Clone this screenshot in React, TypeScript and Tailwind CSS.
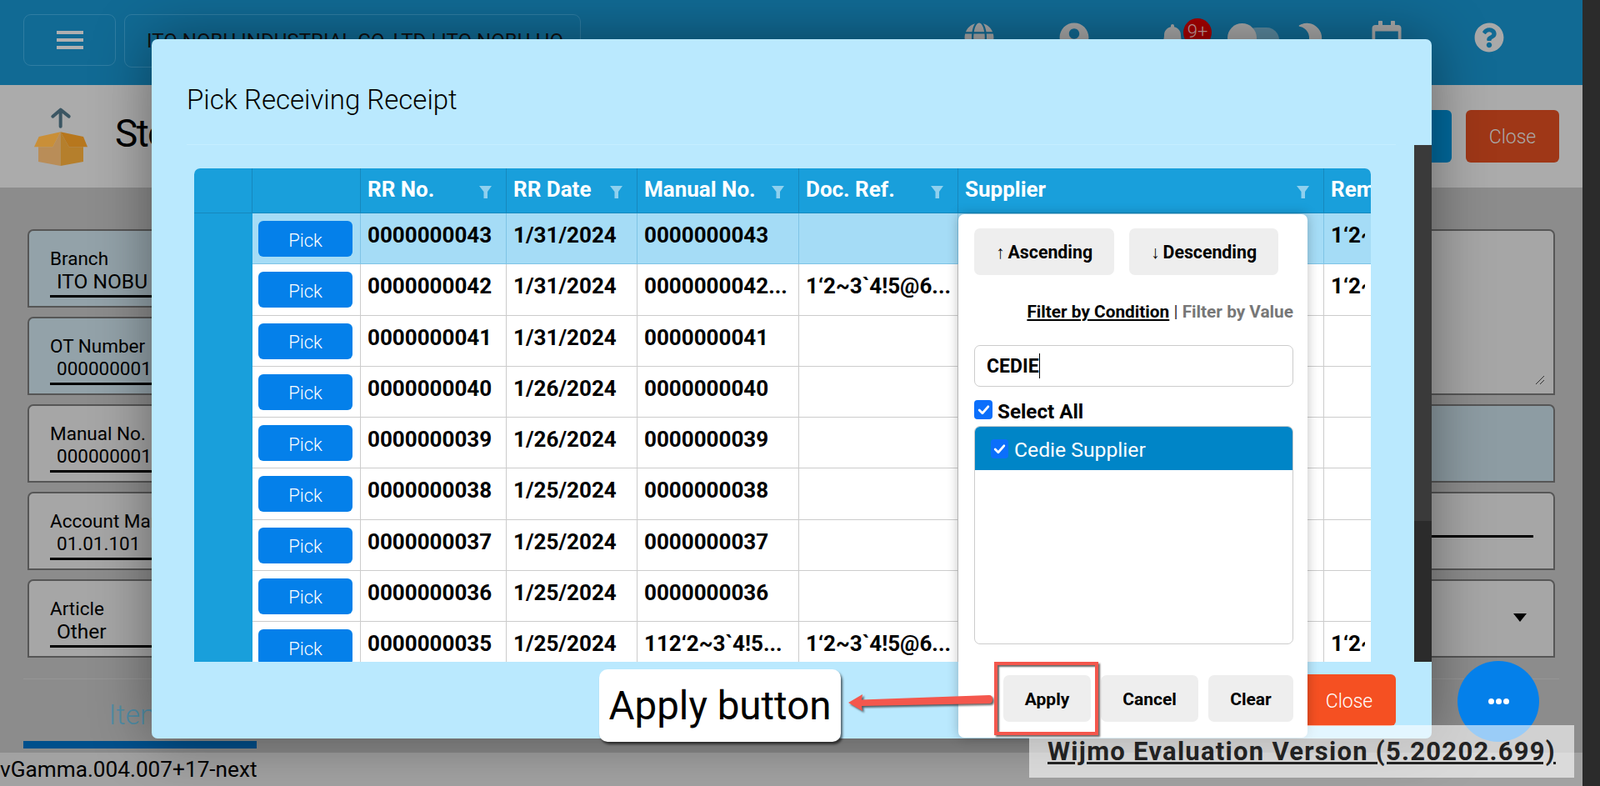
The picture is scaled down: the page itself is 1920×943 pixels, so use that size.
import { FaBell, FaGlobe, FaMoon, FaQuestionCircle, FaRegCalendar, FaUserCircle } from "react-icons/fa";

const rows = [
  { no: "0000000043", date: "1/31/2024", manual: "0000000043", doc: "", supplier: "", rem: "1‘2~3`4!5@6" },
  { no: "0000000042", date: "1/31/2024", manual: "0000000042...", doc: "1‘2~3`4!5@6...", supplier: "1‘2~3`4!5@6#7$8%9^0&1*2(3)4_5+6-7=8[9]0{1}2|3;4:5,6.7/8<9>0?1~2`3!4@5#6$7", rem: "1‘2~3`4!5@6" },
  { no: "0000000041", date: "1/31/2024", manual: "0000000041", doc: "", supplier: "1‘2~3`4!5@6#7$8%9^0&1*2(3)4_5+6-7=8[9]0{1}2|3;4:5,6.7/8<9>0?1~2`3!4@5#6$7", rem: "" },
  { no: "0000000040", date: "1/26/2024", manual: "0000000040", doc: "", supplier: "", rem: "" },
  { no: "0000000039", date: "1/26/2024", manual: "0000000039", doc: "", supplier: "", rem: "" },
  { no: "0000000038", date: "1/25/2024", manual: "0000000038", doc: "", supplier: "", rem: "" },
  { no: "0000000037", date: "1/25/2024", manual: "0000000037", doc: "", supplier: "", rem: "" },
  { no: "0000000036", date: "1/25/2024", manual: "0000000036", doc: "", supplier: "", rem: "" },
  { no: "0000000035", date: "1/25/2024", manual: "112‘2~3`4!5...", doc: "1‘2~3`4!5@6...", supplier: "", rem: "1‘2~3`4!5@6" },
];

const cols = "grid grid-cols-[70px_130px_175px_157px_194px_191px_439px_57px]";
const segoe = "[font-family:'Open_Sans',sans-serif]";

function Funnel() {
  return (
    <svg viewBox="0 0 15 15" className="w-[15px] h-[15px] shrink-0 fill-[#8fd0ee]">
      <polygon points="0,0 15,0 10,7 10,15 5.5,15 5.5,7" />
    </svg>
  );
}

function Head({ label, last }: { label: string; last?: boolean }) {
  return (
    <div className="flex items-center justify-between pl-[8px] pr-[17px] border-r border-[#1688bd] overflow-hidden last:border-r-0">
      <span className="text-[26px] font-bold text-white whitespace-nowrap -mt-[3px]">{label}</span>
      {!last && <span className="mt-[3px]"><Funnel /></span>}
    </div>
  );
}

function Cell({ text, line }: { text: string; line: string }) {
  return (
    <div className={`pl-[8px] pr-[8px] pt-[7px] border-r ${line} text-[26px] font-bold text-black whitespace-nowrap overflow-hidden last:border-r-0`}>
      <div className={text.length > 20 ? "truncate" : "overflow-hidden"}>{text}</div>
    </div>
  );
}

function Check({ className }: { className: string }) {
  return (
    <span className={`flex items-center justify-center bg-[#0b6ffb] rounded-[4px] shrink-0 ${className}`}>
      <svg viewBox="0 0 16 16" className="w-[17px] h-[17px]" fill="none" stroke="white" strokeWidth="2.6" strokeLinecap="round" strokeLinejoin="round">
        <path d="M3 8.5l3.5 3.5L13 4.5" />
      </svg>
    </span>
  );
}

function GreyButton({ children, className }: { children: React.ReactNode; className: string }) {
  return (
    <div className={`flex items-center justify-center bg-[#eeeeee] rounded-[7px] text-black font-bold h-[56px] ${className}`}>
      {children}
    </div>
  );
}

function Field({ label, value, tint, big }: { label: string; value: string; tint?: boolean; big?: boolean }) {
  return (
    <div className={`h-[94px] rounded-tl-[7px] rounded-tr-[7px] border-[2.5px] border-[#565656] pl-[25px] pr-[24px] pt-[20px] ${tint ? "bg-[#93a2a9]" : "bg-[#a6a6a6]"}`}>
      <div className={`${segoe} text-[22.5px] leading-[27px] text-black whitespace-nowrap`}>{label}</div>
      <div className={`${segoe} ${big ? "text-[24.5px]" : "text-[22.5px]"} leading-[27px] pl-[8px] text-black whitespace-nowrap`}>{value}</div>
      <div className="h-[3px] bg-black mt-[3px]" />
    </div>
  );
}

export default function App() {
  return (
    <div className="relative w-[1920px] h-[943px] overflow-hidden flex bg-[#8c8c8c] [font-family:Roboto,sans-serif]">
      <div className="w-[1899px] h-full flex flex-col">
        <header className="h-[102px] bg-[#116a94] flex items-center shrink-0">
          <div className="ml-[28px] w-[111px] h-[62px] rounded-[9px] border border-[#2f7da2] flex flex-col items-center justify-center gap-[5px] -mt-[6px]">
            <span className="w-[32px] h-[4px] bg-[#b0b0b0]" />
            <span className="w-[32px] h-[4px] bg-[#b0b0b0]" />
            <span className="w-[32px] h-[4px] bg-[#b0b0b0]" />
          </div>
          <div className="ml-[10px] w-[548px] h-[64px] rounded-[9px] border border-[#2f7da2] pl-[26px] pt-[13px] [font-family:'Liberation_Serif',serif] text-[24.1px] text-[#111] whitespace-nowrap overflow-hidden -mt-[5px]">
            ITO NOBU INDUSTRIAL CO.,LTD | ITO NOBU HO
          </div>
          <div className="ml-[460px] flex items-center text-[#a9a9a9] -mt-[12px]">
            <FaGlobe className="w-[36px] h-[36px]" />
            <FaUserCircle className="w-[36px] h-[36px] ml-[78px]" />
            <div className="relative ml-[84px]">
              <FaBell className="w-[32px] h-[32px]" />
              <span className="absolute -top-[7px] left-[29px] w-[34px] h-[34px] rounded-full bg-[#a60000] text-[#c9a0a0] text-[22px] leading-[32px] text-center font-light">9+</span>
            </div>
            <div className="relative ml-[50px] w-[62px] h-[34px] mt-[-1px]">
              <span className="absolute left-[20px] top-[5px] w-[42px] h-[30px] rounded-full bg-[#5b8aa0]" />
              <span className="absolute left-0 top-0 w-[35px] h-[35px] rounded-full bg-[#a9a9a9]" />
            </div>
            <FaMoon className="w-[36px] h-[36px] ml-[17px] rotate-[-20deg] -scale-x-100" />
            <FaRegCalendar className="w-[36px] h-[40px] ml-[58px]" />
            <FaQuestionCircle className="w-[36px] h-[36px] ml-[87px] -mt-[1px]" />
          </div>
        </header>
        <div className="h-[123px] bg-[#ababab] flex items-center shrink-0 pl-[41px]">
          <svg viewBox="123 380 192 210" className="w-[64px] h-[70px] shrink-0">
            <path d="M218 390V448M190 412L218 388L248 412" fill="none" stroke="#3b5663" strokeWidth="12" strokeLinecap="round" strokeLinejoin="round" />
            <polygon points="138,522 190,522 218,468 218,590 138,575" fill="#b98d58" />
            <polygon points="218,468 248,522 300,522 300,575 218,590" fill="#b57f2c" />
            <polygon points="123,522 140,485 218,468 190,522" fill="#c98f38" />
            <polygon points="218,468 300,485 315,522 248,522" fill="#b7771d" />
          </svg>
          <div className={`${segoe} ml-[33px] text-[46px] tracking-[-1.5px] text-black -mt-[6px] whitespace-nowrap`}>Stock Out</div>
          <div className="ml-auto mr-[28px] flex gap-[17px]">
            <div className="w-[112px] h-[63px] rounded-[6px] bg-[#006a9e]" />
            <div className={`${segoe} w-[112px] h-[63px] rounded-[6px] bg-[#9f3717] text-[#aaa] text-[23px] pt-[4px] flex items-center justify-center font-light`}>Close</div>
          </div>
        </div>
        <main className="flex-1 flex flex-col px-[33px] pt-[50px] min-h-0">
          <div className="grid grid-cols-[600px_600px] justify-between gap-y-[11px]">
            <Field label="Branch" value="ITO NOBU" tint big />
            <div className="row-span-2 rounded-tl-[7px] rounded-tr-[7px] border-[2.5px] border-[#565656] bg-[#a6a6a6] flex items-end justify-end p-[10px]">
              <svg viewBox="0 0 12 12" className="w-[12px] h-[12px]" stroke="#333" strokeWidth="1"><path d="M1 11L11 1M6 11L11 6" /></svg>
            </div>
            <Field label="OT Number" value="0000000010" tint />
            <Field label="Manual No." value="0000000010" />
            <div className="h-[94px] rounded-tl-[7px] rounded-tr-[7px] border-[2.5px] border-[#565656] bg-[#8d9ca3]" />
            <Field label="Account Manager" value="01.01.101" />
            <Field label="Remarks" value="" />
            <Field label="Article" value="Other" big />
            <div className="h-[94px] relative rounded-tl-[7px] rounded-tr-[7px] border-[2.5px] border-[#565656] bg-[#a6a6a6]">
              <span className="absolute right-[32px] top-[39px] w-0 h-0 border-l-[8px] border-r-[8px] border-t-[10px] border-l-transparent border-r-transparent border-t-black" />
            </div>
          </div>
          <div className="h-px bg-[#969696] mt-[25px] -mx-[5px]" />
          <div className="w-[280px] -ml-[5px] flex-1 flex flex-col items-center">
            <div className={`${segoe} mt-[16px] pl-[10px] text-[34px] leading-[52px] font-light text-[#4f8da6]`}>Items</div>
            <div className="h-[9px] w-full bg-[#00508c] mt-auto" />
          </div>
        </main>
        <div className="h-[5px] shrink-0" />
        <footer className={`${segoe} h-[40px] bg-[#a2a2a2] shrink-0 text-[26.2px] leading-[41px] text-black whitespace-nowrap`}>vGamma.004.007+17-next</footer>
      </div>
      <div className="w-[21px] h-full bg-[#2b2b2b]" />

      {/* modal */}
      <div className="absolute left-[182px] top-[47px] w-[1536px] h-[839px] bg-[#bae9fe] rounded-[7px] flex flex-col shadow-[0_0_70px_rgba(0,0,0,0.4)]">
        <div className="h-[127px] shrink-0 pl-[42px] pr-[43px]">
          <div className="h-full border-b border-[#c5eeff] pt-[48px]">
            <div className={`${segoe} text-[33px] leading-[50px] font-light text-black`}>Pick Receiving Receipt</div>
          </div>
        </div>
        <div className="flex h-[620px] shrink-0">
          <div className="pl-[51px] pt-[28px] w-[1515px]">
            <div className="w-[1412px] h-[592px] rounded-t-[7px] overflow-hidden bg-white">
              <div className={`${cols} h-[54px] bg-[#199fdb] border-b border-[#1688bd]`}>
                <div className="border-r border-[#1688bd]" />
                <div className="border-r border-[#1688bd]" />
                <Head label="RR No." />
                <Head label="RR Date" />
                <Head label="Manual No." />
                <Head label="Doc. Ref." />
                <Head label="Supplier" />
                <Head label="Remarks" last />
              </div>
              {rows.map((r, i) => {
                const line = i === 0 ? "border-[#7fc4e6]" : "border-[#cccccc]";
                return (
                  <div key={r.no} className={`${cols} h-[61.25px] border-b ${line} ${i === 0 ? "bg-[#a5dcf6]" : "bg-white"}`}>
                    <div className="bg-[#199fdb] -mb-px" />
                    <div className={`border-r ${line} pl-[7px] pt-[9px]`}>
                      <div className={`${segoe} w-[113px] h-[43px] rounded-[6px] bg-[#0480ea] pt-[3px] flex items-center justify-center text-white text-[22px] font-light`}>Pick</div>
                    </div>
                    <Cell text={r.no} line={line} />
                    <Cell text={r.date} line={line} />
                    <Cell text={r.manual} line={line} />
                    <Cell text={r.doc} line={line} />
                    <Cell text={r.supplier} line={line} />
                    <Cell text={r.rem} line={line} />
                  </div>
                );
              })}
            </div>
          </div>
          <div className="w-[21px] flex flex-col">
            <div className="h-[451px] bg-[#3a3a3a]" />
            <div className="flex-1 bg-[#2b2b2b]" />
          </div>
        </div>
        <div className="flex justify-end pt-[15px] pr-[43px]">
          <div className={`${segoe} w-[112px] h-[62px] rounded-[6px] bg-[#f55022] text-white text-[23px] pt-[4px] font-light flex items-center justify-center`}>Close</div>
        </div>

        {/* column filter popup */}
        <div className="absolute left-[968px] top-[210px] w-[419px] h-[628px] bg-white rounded-[7px] shadow-[0_0_14px_rgba(0,0,0,0.25)] pl-[19px] pr-[17px] pt-[17px] flex flex-col">
          <div className="flex gap-[18px]">
            <GreyButton className="w-[168px] text-[21.3px] pt-[2px]"><span className="font-normal mr-[4px]">↑</span>Ascending</GreyButton>
            <GreyButton className="w-[179px] text-[21.3px] pt-[2px]"><span className="font-normal mr-[4px]">↓</span>Descending</GreyButton>
          </div>
          <div className="mt-[32px] text-right text-[20.8px] leading-[24px] font-bold text-black whitespace-nowrap">
            <span className="underline">Filter by Condition</span>
            <span className="text-[#333] font-normal"> | </span>
            <span className="text-[#777777]">Filter by Value</span>
          </div>
          <div className="mt-[28px] h-[50px] rounded-[7px] border border-[#cccccc] flex items-center pl-[14px] text-[23px] font-bold text-black">
            <span className="mt-[3px]">CEDIE</span><span className="w-px h-[30px] bg-black" />
          </div>
          <div className="mt-[15px] h-[24px] flex items-center gap-[6px] text-[24.2px] font-bold text-black">
            <Check className="w-[22px] h-[23px]" />
            <span className="mt-[7px]">Select All</span>
          </div>
          <div className="mt-[8px] h-[262px] rounded-[7px] border border-[#cccccc] overflow-hidden">
            <div className="h-[52px] bg-[#0085c7] flex items-center pl-[19px] gap-[7px] text-[24.7px] text-white">
              <Check className="w-[21px] h-[23px]" />
              <span className="mt-[3px]">Cedie Supplier</span>
            </div>
          </div>
          <div className="mt-[37px] flex justify-between pl-[35px]">
            <GreyButton className="w-[105px] text-[21px] pt-[3px]">Apply</GreyButton>
            <GreyButton className="w-[117px] text-[21px] pt-[3px]">Cancel</GreyButton>
            <GreyButton className="w-[102px] text-[21px] pt-[3px]">Clear</GreyButton>
          </div>
        </div>
      </div>

      {/* floating action button */}
      <div className="absolute left-[1749px] top-[793px] w-[98px] h-[97px] rounded-full bg-[#0480ea] flex items-center justify-center gap-[2px]">
        <span className="w-[7px] h-[7px] rounded-full bg-white" />
        <span className="w-[7px] h-[7px] rounded-full bg-white" />
        <span className="w-[7px] h-[7px] rounded-full bg-white" />
      </div>

      {/* wijmo watermark */}
      <div className="absolute left-[1235px] top-[870px] w-[654px] h-[63px] bg-white/60 pt-[2px] flex items-center justify-center [font-family:'Liberation_Sans',sans-serif] font-bold text-[31px] tracking-[1.26px] text-[#222] underline whitespace-nowrap">
        Wijmo Evaluation Version (5.20202.699)
      </div>

      {/* annotation */}
      <div className="absolute left-[719px] top-[803px] w-[290px] h-[87px] rounded-[10px] bg-white pt-[2px] shadow-[2px_3px_3px_rgba(0,0,0,0.6)] flex items-center justify-center [font-family:'Liberation_Sans',sans-serif] text-[47.5px] text-black whitespace-nowrap">
        Apply button
      </div>
      <svg viewBox="0 0 180 26" className="absolute left-[1015px] top-[830px] w-[180px] h-[26px] drop-shadow-[2px_2px_1px_rgba(0,0,0,0.6)]">
        <path d="M3 13L20 3L19 9.5L172 4Q176 4 176 9Q176 14 172 14L19 17L20 23Z" fill="#f4574d" />
      </svg>
      <div className="absolute left-[1193px] top-[794px] w-[125px] h-[88px] border-[4px] border-[#f4574d] shadow-[2px_2px_2px_rgba(0,0,0,0.6),inset_2px_2px_2px_rgba(0,0,0,0.6)]" />
    </div>
  );
}
